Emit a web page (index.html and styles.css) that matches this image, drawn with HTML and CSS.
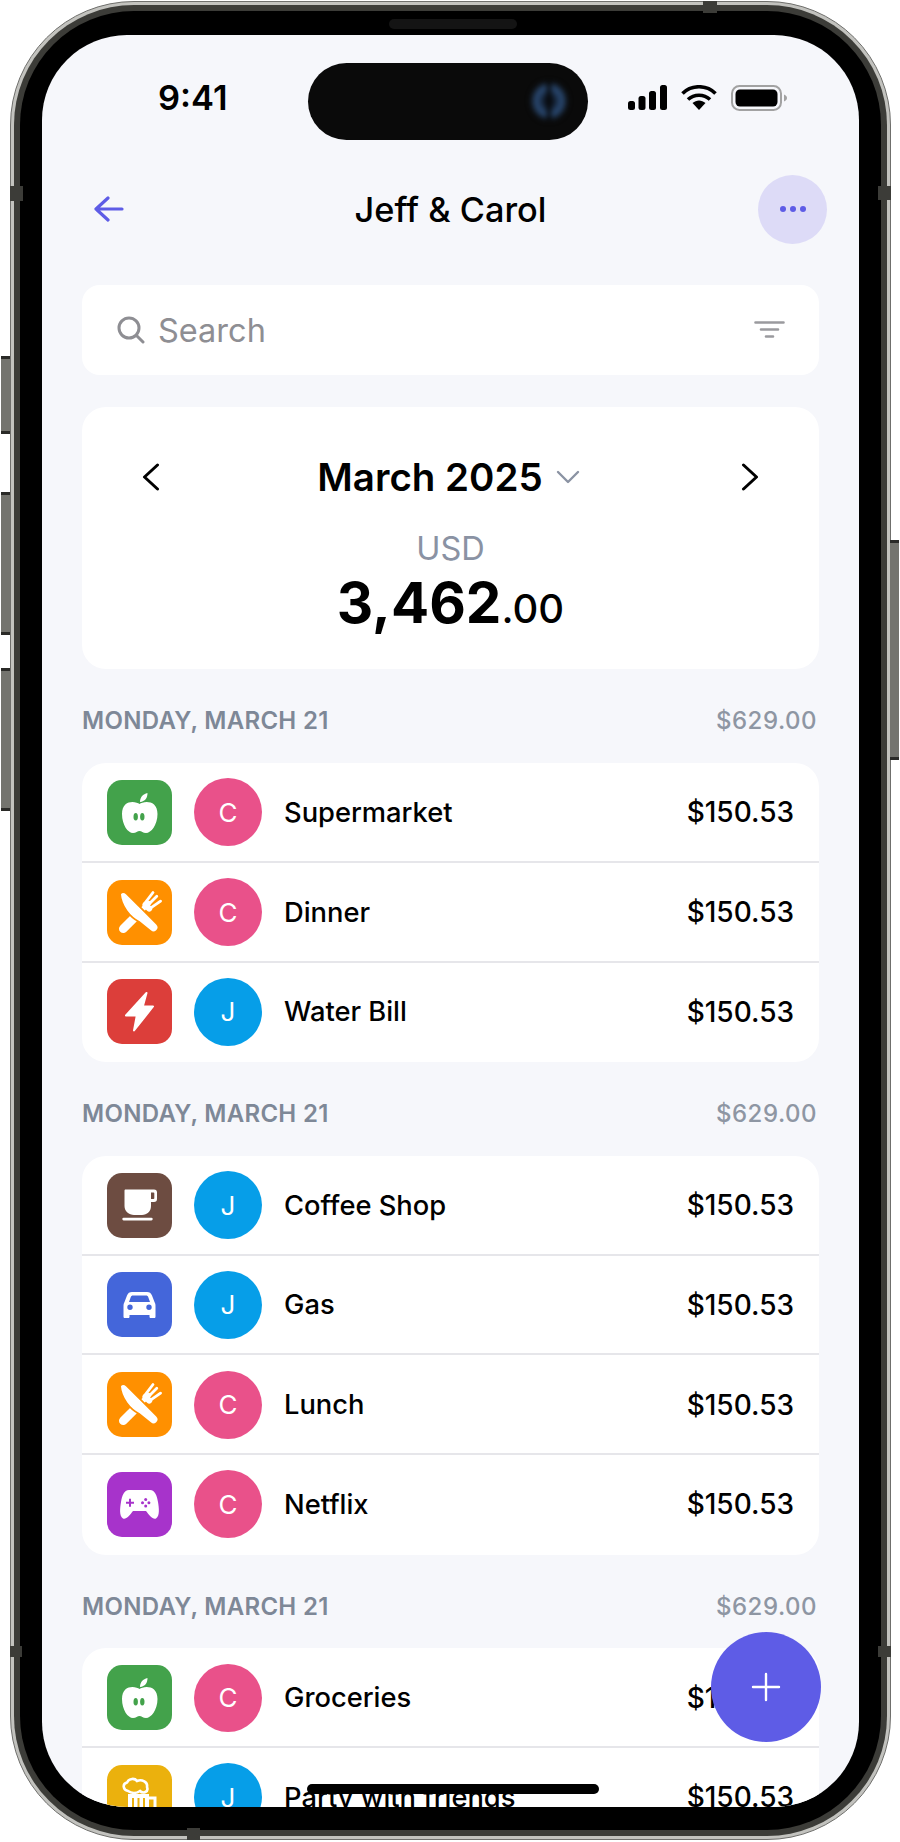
FILE: index.html
```html
<!DOCTYPE html>
<html lang="en">
<head>
    <meta charset="UTF-8">
    <meta name="viewport" content="width=device-width, initial-scale=1.0">
    <title>Jeff &amp; Carol</title>
    <link rel="stylesheet" href="styles.css">
</head>
<body>
    <svg class="sprite" xmlns="http://www.w3.org/2000/svg">
        <symbol id="i-apple" viewBox="0 0 65 65">
            <path fill="#fff" d="M32.5 24C36 21 50.5 19 50.5 34C50.5 45 44 53 39 53C36 53 34.5 51 32.5 51C30.5 51 29 53 26 53C21 53 15 45 15 34C15 19 29 21 32.5 24Z"/>
            <path fill="#fff" d="M33 22C33 17 36 14 40.5 13C40.5 18 38 21.5 33 22Z"/>
            <ellipse fill="#43a24b" cx="28.7" cy="36.7" rx="2.2" ry="3.8"/>
            <ellipse fill="#43a24b" cx="35.3" cy="36.7" rx="2.2" ry="3.8"/>
        </symbol>
        <symbol id="i-food" viewBox="0 0 65 65">
            <g transform="translate(32.5 32.5) scale(1.08) translate(-32.5 -32.5)">
                <g stroke="#fff" stroke-linecap="round" fill="none">
                    <path stroke-width="8" d="M17.5 47.5L27 38"/>
                    <path stroke-width="4.5" d="M26 39L41 24"/>
                    <path stroke-width="2.6" d="M37 24.500L45 14M39.500 26.500L48.500 17.500M42 29L52 22"/>
                    <path stroke-width="5.500" d="M38 25.500L41.500 29"/>
                </g>
                <path fill="#fff" stroke="#ff9000" stroke-width="1.6" d="M14.500 15.500C15.500 13 18.500 13 20.500 15L37 31.500L48.500 43C50.500 45 50.500 47.500 48.500 49.500C46.500 51.500 44 51 42.500 49.500L32 41C24 37 15.500 27 14.500 15.500Z"/>
            </g>
        </symbol>
        <symbol id="i-bolt" viewBox="0 0 65 65">
            <path fill="#fff" stroke="#fff" stroke-width="2" stroke-linejoin="round" d="M39.5 14L19 36.5H29.8L27 51.5L46 27.5H35.8Z"/>
        </symbol>
        <symbol id="i-cup" viewBox="0 0 65 65">
            <path fill="#fff" fill-rule="evenodd" d="M18.500 16.500H47C49 16.500 50 17.500 50 19.500V26C50 28 49 29 47 29H44V33C44 38.500 40 42 35 42H27C22 42 17.500 38.500 17.500 33V17.500C17.500 17 18 16.500 18.500 16.500ZM44 19.500V26H46.500C47 26 47.300 25.700 47.300 25.200V20.300C47.300 19.800 47 19.500 46.500 19.500Z"/>
            <rect fill="#fff" x="15.300" y="44.800" width="30.400" height="2.600" rx="1.300"/>
        </symbol>
        <symbol id="i-car" viewBox="0 0 65 65">
            <path fill="#fff" fill-rule="evenodd" d="M25 20H40C42.500 20 44 21 45 23.500L47.500 30C48.500 31.500 48.500 33 48.500 35V44.500C48.500 45.500 48 46 47 46H44C43 46 42.500 45.500 42.500 44.500V43H22.500V44.500C22.500 45.500 22 46 21 46H18C17 46 16.500 45.500 16.500 44.500V35C16.500 33 16.500 31.500 17.500 30L20 23.500C21 21 22.500 20 25 20ZM26 23.500C24.800 23.500 24.200 24 23.800 25L22 30H43L41.200 25C40.800 24 40.200 23.500 39 23.500ZM23 32.500A2.700 2.700 0 1 0 23 37.900A2.700 2.700 0 1 0 23 32.500ZM42 32.500A2.700 2.700 0 1 0 42 37.900A2.700 2.700 0 1 0 42 32.500Z"/>
        </symbol>
        <symbol id="i-pad" viewBox="0 0 65 65">
            <path fill="#fff" d="M22 18H43C48 18 50 24 51 30C52 36 53 44 49 46.500C46 48 42 43 39 39H26C23 43 19 48 16 46.500C12 44 13 36 14 30C15 24 17 18 22 18Z"/>
            <path stroke="#a733cb" stroke-width="2" d="M19 30.700H27M23 26.700V34.700"/>
            <g fill="#a733cb">
                <circle cx="38.700" cy="27.500" r="1.500"/>
                <circle cx="38.700" cy="33.900" r="1.500"/>
                <circle cx="35.500" cy="30.700" r="1.500"/>
                <circle cx="41.900" cy="30.700" r="1.500"/>
            </g>
        </symbol>
        <symbol id="i-beer" viewBox="0 0 65 65">
            <path fill="none" stroke="#fff" stroke-width="2.600" d="M21 26C16 25 15 19 20 17.500C22 13 28 13 30 16C35 14 41 17 40 22C42 27 36 29 33 26C30 28 25 29 21 26Z"/>
            <path fill="none" stroke="#fff" stroke-width="3" d="M42 33H48V50"/>
            <path fill="#fff" d="M21 29H42V56H21Z"/>
            <path stroke="#ebb10d" stroke-width="2" d="M26 33V56M31.500 33V56M37 33V56"/>
        </symbol>
    </svg>

    <div class="phone">
        <span class="side-btn btn-silent"></span>
        <span class="side-btn btn-up"></span>
        <span class="side-btn btn-down"></span>
        <span class="side-btn btn-power"></span>
        <span class="band band-lt"></span>
        <span class="band band-lb"></span>
        <span class="band band-rt"></span>
        <span class="band band-rb"></span>
        <span class="band band-top"></span>
        <span class="band band-bottom"></span>

        <div class="rim">
            <div class="bezel">
                <span class="speaker"></span>
                <div class="screen">
                    <!-- notch and home bar sit on top of the content -->
                    <div class="island"><span class="lens"></span></div>
                    <span class="home-bar"></span>

                    <div class="status">
                        <span class="time">9:41</span>
                        <div class="status-icons">
                            <svg width="39" height="25" viewBox="0 0 39 25"><rect x="0" y="16" width="7" height="9" rx="2.500"/><rect x="10.500" y="11" width="7" height="14" rx="2.500"/><rect x="21" y="6" width="7" height="19" rx="2.500"/><rect x="32" y="0" width="7" height="25" rx="2.500"/></svg>
                            <svg width="36" height="25" viewBox="0 0 36 25"><path fill="none" stroke="#000" stroke-width="3.600" d="M1.500 8.500C10.500 -0.500 25.500 -0.500 34.500 8.500M7 14.500C13 8.800 23 8.800 29 14.500"/><path d="M11.500 18C15.500 14.500 20.500 14.500 24.500 18L18 25Z"/></svg>
                            <svg width="56" height="26" viewBox="0 0 56 26"><rect x="1" y="1" width="49" height="24" rx="7.500" fill="none" stroke="#a2a2a2" stroke-width="2"/><rect x="4.500" y="4.500" width="42" height="17" rx="4.500"/><path fill="#a2a2a2" d="M53 9.500C55 10.500 56 11.500 56 13C56 14.500 55 15.500 53 16.500Z"/></svg>
                        </div>
                    </div>

                    <header class="nav">
                        <svg class="back" width="30" height="26" viewBox="0 0 30 26"><path fill="none" stroke="#5e5ce6" stroke-width="3.200" stroke-linecap="round" stroke-linejoin="round" d="M28 13H2M14 2L2 13L14 24"/></svg>
                        <h1 class="nav-title">Jeff &amp; Carol</h1>
                        <button class="more" type="button">
                            <span class="dot"></span><span class="dot"></span><span class="dot"></span>
                        </button>
                    </header>

                    <div class="search">
                        <svg width="28" height="28" viewBox="0 0 28 28"><circle cx="12" cy="12" r="10" fill="none" stroke="#8e8e93" stroke-width="3"/><path stroke="#8e8e93" stroke-width="3" stroke-linecap="round" d="M19.500 19.500L26 26"/></svg>
                        <span class="search-text">Search</span>
                        <svg class="filter" width="31" height="18" viewBox="0 0 31 18"><path stroke="#9a9a9e" stroke-width="2.600" stroke-linecap="round" d="M1.500 1.500H29.500M7 8.500H24M12 15.500H19"/></svg>
                    </div>

                    <section class="month-card">
                        <div class="month-row">
                            <svg width="18" height="28" viewBox="0 0 18 28"><path fill="none" stroke="#000" stroke-width="3" stroke-linecap="round" stroke-linejoin="round" d="M15.500 2L2.500 14L15.500 26"/></svg>
                            <div class="month-name">
                                <span>March 2025</span>
                                <svg width="24" height="14" viewBox="0 0 24 14"><path fill="none" stroke="#8b93a3" stroke-width="2.400" stroke-linecap="round" stroke-linejoin="round" d="M2 2L12 12L22 2"/></svg>
                            </div>
                            <svg width="18" height="28" viewBox="0 0 18 28"><path fill="none" stroke="#000" stroke-width="3" stroke-linecap="round" stroke-linejoin="round" d="M2.500 2L15.500 14L2.500 26"/></svg>
                        </div>
                        <div class="currency">USD</div>
                        <div class="total"><b>3,462</b>.00</div>
                    </section>

                    <div class="day-head"><span>MONDAY, MARCH 21</span><span class="day-sum">$629.00</span></div>
                    <ul class="list">
                        <li class="row">
                            <svg class="cat green"><use href="#i-apple"/></svg>
                            <span class="avatar pink">C</span>
                            <span class="name">Supermarket</span>
                            <span class="price">$150.53</span>
                        </li>
                        <li class="row">
                            <svg class="cat orange"><use href="#i-food"/></svg>
                            <span class="avatar pink">C</span>
                            <span class="name">Dinner</span>
                            <span class="price">$150.53</span>
                        </li>
                        <li class="row">
                            <svg class="cat red"><use href="#i-bolt"/></svg>
                            <span class="avatar sky">J</span>
                            <span class="name">Water Bill</span>
                            <span class="price">$150.53</span>
                        </li>
                    </ul>

                    <div class="day-head"><span>MONDAY, MARCH 21</span><span class="day-sum">$629.00</span></div>
                    <ul class="list">
                        <li class="row">
                            <svg class="cat brown"><use href="#i-cup"/></svg>
                            <span class="avatar sky">J</span>
                            <span class="name">Coffee Shop</span>
                            <span class="price">$150.53</span>
                        </li>
                        <li class="row">
                            <svg class="cat blue"><use href="#i-car"/></svg>
                            <span class="avatar sky">J</span>
                            <span class="name">Gas</span>
                            <span class="price">$150.53</span>
                        </li>
                        <li class="row">
                            <svg class="cat orange"><use href="#i-food"/></svg>
                            <span class="avatar pink">C</span>
                            <span class="name">Lunch</span>
                            <span class="price">$150.53</span>
                        </li>
                        <li class="row">
                            <svg class="cat purple"><use href="#i-pad"/></svg>
                            <span class="avatar pink">C</span>
                            <span class="name">Netflix</span>
                            <span class="price">$150.53</span>
                        </li>
                    </ul>

                    <div class="day-head"><span>MONDAY, MARCH 21</span><span class="day-sum">$629.00</span></div>
                    <ul class="list">
                        <li class="row">
                            <svg class="cat green"><use href="#i-apple"/></svg>
                            <span class="avatar pink">C</span>
                            <span class="name">Groceries</span>
                            <span class="price">$150.53</span>
                        </li>
                        <li class="row">
                            <svg class="cat yellow"><use href="#i-beer"/></svg>
                            <span class="avatar sky">J</span>
                            <span class="name">Party with friends</span>
                            <span class="price">$150.53</span>
                        </li>
                    </ul>

                    <button class="fab" type="button">
                        <svg width="30" height="30" viewBox="0 0 30 30"><path stroke="#fff" stroke-width="2.400" stroke-linecap="round" d="M15 2V28M2 15H28"/></svg>
                    </button>
                </div>
            </div>
        </div>
    </div>
</body>
</html>
```

FILE: styles.css
```css
* {
    box-sizing: border-box;
}
html, body {
    height: 100%;
}
body {
    margin: 0;
    padding: 1px 0 0 10px;
    background-color: #fff;
    font-family: Inter, "Liberation Sans", sans-serif;
    color: #000;
    overflow: hidden;
}
.sprite {
    display: none;
}

/* device frame */
.phone {
    position: relative;
    width: 881px;
    height: 1839px;
    padding: 3px;
    border: 1px solid #6f6f6c;
    border-radius: 124px;
    background-color: #c2c2be;
}
.rim {
    height: 100%;
    padding: 6px;
    border-radius: 120px;
    background-color: #3c3c38;
}
.bezel {
    position: relative;
    height: 100%;
    padding: 24px 22px 23px;
    border-radius: 114px;
    background-color: #000;
}
.speaker {
    position: absolute;
    top: 8px;
    left: 369px;
    width: 128px;
    height: 10px;
    border-radius: 5px;
    background-color: #141414;
}
.side-btn {
    position: absolute;
    width: 9px;
    background-color: #74746e;
    border-top: 3px solid #2a2a27;
    border-bottom: 3px solid #2a2a27;
}
.btn-silent { left: -10px; top: 354px; height: 78px; }
.btn-up { left: -10px; top: 490px; height: 143px; }
.btn-down { left: -10px; top: 666px; height: 143px; }
.btn-power { right: -9px; top: 538px; height: 220px; }
.band {
    position: absolute;
    background-color: #3c3c38;
    z-index: 2;
}
.band-lt { left: -1px; top: 184px; width: 13px; height: 15px; }
.band-lb { left: -1px; top: 1644px; width: 12px; height: 11px; }
.band-rt { right: -1px; top: 184px; width: 13px; height: 14px; }
.band-rb { right: -1px; top: 1644px; width: 13px; height: 11px; }
.band-top { left: 692px; top: -1px; width: 14px; height: 12px; }
.band-bottom { left: 176px; bottom: -1px; width: 13px; height: 12px; }

.screen {
    position: relative;
    height: 100%;
    border-radius: 85px;
    background-color: #f6f7fb;
    overflow: hidden;
}
.island {
    position: absolute;
    top: 28px;
    left: 266px;
    width: 280px;
    height: 77px;
    border-radius: 39px;
    background-color: #0a0a0a;
}
.lens {
    position: absolute;
    left: 222px;
    top: 18px;
    width: 38px;
    height: 40px;
    border-radius: 50%;
    background:
        linear-gradient(90deg, transparent 42%, #050505 48%, #050505 52%, transparent 58%),
        radial-gradient(ellipse at center, #0c1420 15%, #2c4d78 48%, #0a0a0a 72%);
    filter: blur(2.5px);
}
.home-bar {
    position: absolute;
    left: 265px;
    top: 1749px;
    width: 292px;
    height: 10px;
    border-radius: 5px;
    background-color: #000;
    z-index: 3;
}

/* status bar */
.status {
    display: flex;
    justify-content: space-between;
    align-items: center;
    height: 139px;
    padding: 44px 72px 58px 116px;
}
.time {
    font-size: 34.5px;
    font-weight: 600;
    line-height: 37px;
}
.status-icons {
    display: flex;
    align-items: center;
    gap: 14px;
}

/* title row */
.nav {
    display: grid;
    grid-template-columns: 1fr auto 1fr;
    align-items: center;
    height: 70px;
    padding: 0 32px;
}
.back {
    margin-left: 20px;
}
.nav-title {
    margin: 0;
    font-size: 34.3px;
    font-weight: 500;
}
.more {
    justify-self: end;
    display: flex;
    justify-content: center;
    align-items: center;
    gap: 4px;
    width: 69px;
    height: 69px;
    padding: 0;
    border: none;
    border-radius: 50%;
    background-color: #dddbf7;
}
.dot {
    width: 6px;
    height: 6px;
    border-radius: 50%;
    background-color: #5e5ce6;
}

.search {
    display: flex;
    align-items: center;
    gap: 13px;
    height: 90px;
    margin: 41px 40px 0;
    padding: 0 34px 0 35px;
    border-radius: 18px;
    background-color: #fff;
}
.search-text {
    flex: 1;
    font-size: 32.5px;
    color: #8e8e93;
}

.month-card {
    height: 262px;
    margin: 32px 40px 0.5px;
    padding: 40px 60px 0;
    border-radius: 24px;
    background-color: #fff;
    text-align: center;
}
.month-row {
    display: flex;
    justify-content: space-between;
    align-items: center;
    height: 60px;
}
.month-name {
    display: flex;
    align-items: center;
    gap: 13px;
    margin-right: 4px;
    font-size: 38.5px;
    font-weight: 600;
}
.currency {
    margin-top: 23px;
    font-size: 32.5px;
    line-height: 38px;
    color: #8a92a3;
}
.total {
    margin-top: 3px;
    font-size: 40px;
    font-weight: 500;
    line-height: 64px;
}
.total b {
    font-size: 56.5px;
    font-weight: 700;
}

.day-head {
    display: flex;
    justify-content: space-between;
    align-items: center;
    height: 93.5px;
    margin: 0 42px 0 40px;
    padding-top: 9px;
    font-size: 24px;
    font-weight: 600;
    letter-spacing: 0.3px;
    color: #7e8897;
}
.day-sum {
    font-weight: 500;
    letter-spacing: 0.5px;
    color: #8e96a3;
}
.list {
    margin: 0 40px;
    padding: 0;
    list-style: none;
    border-radius: 24px;
    background-color: #fff;
}
.row {
    display: flex;
    align-items: center;
    height: 99.75px;
    padding: 1px 25px 0;
    border-bottom: 2px solid #e6e6ea;
}
.row:last-child {
    border-bottom-color: transparent;
}
.cat {
    flex: none;
    width: 65px;
    height: 65px;
    border-radius: 15px;
}
.green { background-color: #43a24b; }
.orange { background-color: #ff9000; }
.red { background-color: #dc3e3a; }
.brown { background-color: #6d4c41; }
.blue { background-color: #4466da; }
.purple { background-color: #a733cb; }
.yellow { background-color: #ebb10d; }
.avatar {
    flex: none;
    display: flex;
    justify-content: center;
    align-items: center;
    width: 68px;
    height: 68px;
    margin: 0 22px;
    border-radius: 50%;
    font-size: 26px;
    color: #fff;
}
.pink { background-color: #e9518a; }
.sky { background-color: #069ee8; }
.name {
    flex: 1;
    font-size: 27.3px;
    font-weight: 450;
}
.price {
    font-size: 28px;
    font-weight: 450;
}

.fab {
    position: absolute;
    left: 669px;
    top: 1597px;
    display: flex;
    justify-content: center;
    align-items: center;
    width: 110px;
    height: 110px;
    padding: 0;
    border: none;
    border-radius: 50%;
    background-color: #5e5ce6;
}
```
